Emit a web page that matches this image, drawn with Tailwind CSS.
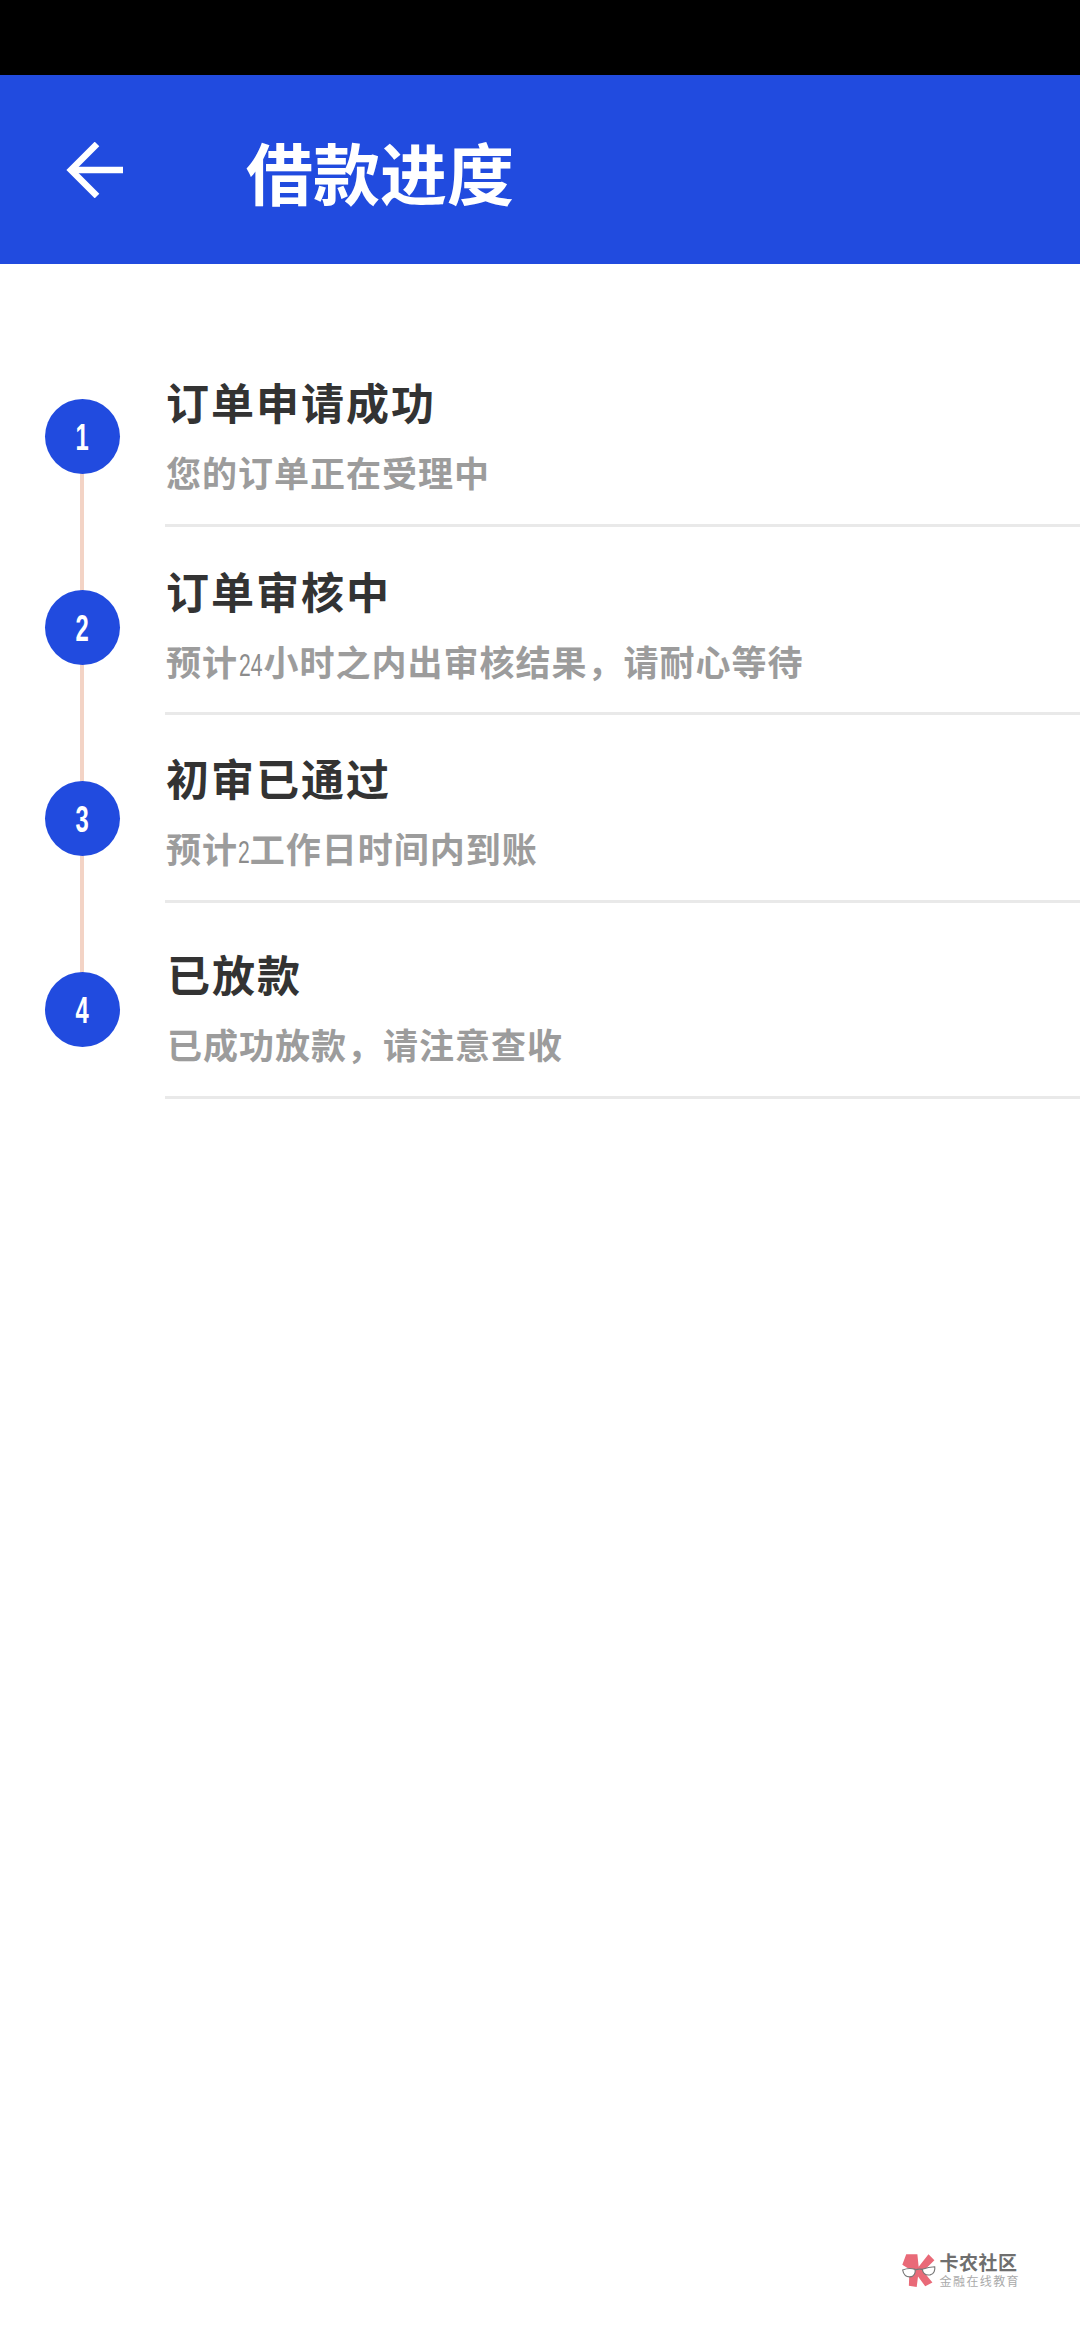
<!DOCTYPE html>
<html lang="zh-CN">
<head>
    <meta charset="UTF-8">
    <meta name="viewport" content="width=device-width, initial-scale=1.0">
    <title>借款进度</title>
    <script src="https://cdn.jsdelivr.net/npm/@tailwindcss/browser@4"></script>
</head>
<body class="bg-white">
    <div class="w-[1080px] h-[2340px] flex flex-col font-['Noto_Sans_CJK_SC','Noto_Sans',sans-serif]">
        <div class="h-[75px] bg-black"></div>

        <header class="h-[189px] bg-[#214bdf] flex items-center text-white">
            <svg class="ml-[66px] mt-[1px]" width="58" height="56" viewBox="0 0 58 56" fill="none" stroke="currentColor" stroke-width="6.5">
                <path d="M31 2 5 28l26 26"></path>
                <path d="M5 28h52"></path>
            </svg>
            <h1 class="ml-[122px] mt-[3px] text-[67px] leading-[80px] font-bold">借款进度</h1>
        </header>

        <main class="relative">
            <div class="absolute left-[80px] top-[200px] w-[4px] h-[520px] bg-[#f3d3c5]"></div>

            <div class="relative flex h-[263px]">
                <div class="w-[165px] pl-[45px] pt-[135px]">
                    <div class="w-[75px] h-[75px] pt-[3px] rounded-full bg-[#214bdf] text-white flex items-center justify-center font-['Liberation_Sans',sans-serif]"><span class="inline-block scale-x-[0.66] text-[36px] leading-none font-bold">1</span></div>
                </div>
                <div class="flex-1 border-b-[3px] border-[#e9e9e9] pt-[111px] pl-[1px]">
                    <h2 class="text-[43px] leading-[52px] font-bold text-[#333] tracking-[2px]">订单申请成功</h2>
                    <p class="mt-[23px] text-[35px] leading-[44px] font-bold text-[#9c9c9c] tracking-[1px]">您的订单正在受理中</p>
                </div>
            </div>

            <div class="relative flex h-[188px]">
                <div class="w-[165px] pl-[45px] pt-[63px]">
                    <div class="w-[75px] h-[75px] pt-[3px] rounded-full bg-[#214bdf] text-white flex items-center justify-center font-['Liberation_Sans',sans-serif]"><span class="inline-block scale-x-[0.66] text-[36px] leading-none font-bold">2</span></div>
                </div>
                <div class="flex-1 border-b-[3px] border-[#e9e9e9] pt-[37px] pl-[1px]">
                    <h2 class="text-[43px] leading-[52px] font-bold text-[#333] tracking-[2px]">订单审核中</h2>
                    <p class="mt-[23px] text-[35px] leading-[44px] font-bold text-[#9c9c9c] tracking-[1px]">预计<span class="inline-block mx-[-5px] scale-x-[0.66] font-['Liberation_Sans',sans-serif] font-normal text-[#8c8c8c] text-[32px] tracking-normal">24</span>小时之内出审核结果，请耐心等待</p>
                </div>
            </div>

            <div class="relative flex h-[188px]">
                <div class="w-[165px] pl-[45px] pt-[66px]">
                    <div class="w-[75px] h-[75px] pt-[3px] rounded-full bg-[#214bdf] text-white flex items-center justify-center font-['Liberation_Sans',sans-serif]"><span class="inline-block scale-x-[0.66] text-[36px] leading-none font-bold">3</span></div>
                </div>
                <div class="flex-1 border-b-[3px] border-[#e9e9e9] pt-[36px] pl-[1px]">
                    <h2 class="text-[43px] leading-[52px] font-bold text-[#333] tracking-[2px]">初审已通过</h2>
                    <p class="mt-[23px] text-[35px] leading-[44px] font-bold text-[#9c9c9c] tracking-[1px]">预计<span class="inline-block mx-[-3px] scale-x-[0.66] font-['Liberation_Sans',sans-serif] font-normal text-[#8c8c8c] text-[32px] tracking-normal">2</span>工作日时间内到账</p>
                </div>
            </div>

            <div class="relative flex h-[196px]">
                <div class="w-[165px] pl-[45px] pt-[69px]">
                    <div class="w-[75px] h-[75px] pt-[3px] rounded-full bg-[#214bdf] text-white flex items-center justify-center font-['Liberation_Sans',sans-serif]"><span class="inline-block scale-x-[0.66] text-[36px] leading-none font-bold">4</span></div>
                </div>
                <div class="flex-1 border-b-[3px] border-[#e9e9e9] pt-[44px] pl-[2px]">
                    <h2 class="text-[43px] leading-[52px] font-bold text-[#333] tracking-[2px]">已放款</h2>
                    <p class="mt-[23px] text-[35px] leading-[44px] font-bold text-[#9c9c9c] tracking-[1px]">已成功放款，请注意查收</p>
                </div>
            </div>
        </main>

        <footer class="mt-auto self-end mr-[60px] mb-[52px] flex items-center gap-[3px]">
            <svg width="36" height="36" viewBox="60 65 110 110">
                <path d="M76 72h34l4 38 30-38 18 18-34 34 28 34-22 12-22-30-4 32-24-4 2-50-22-14z" fill="#e96a78"></path>
                <path d="M65 120c12-5 26-6 38-2 2 10-2 22-16 23-14 0-20-10-22-21zM125 118c12-5 26-8 38-8 2 10-2 22-14 25-14 2-22-6-24-17zM103 120c7-3 15-3 22-2" fill="#fff" stroke="#777" stroke-width="3.5"></path>
            </svg>
            <div class="flex flex-col">
                <span class="text-[19px] leading-[22px] font-bold text-[#6f6f6f] tracking-[0.5px]">卡农社区</span>
                <span class="text-[12px] leading-[15px] text-[#aaa] tracking-[1.4px]">金融在线教育</span>
            </div>
        </footer>
    </div>
</body>
</html>
